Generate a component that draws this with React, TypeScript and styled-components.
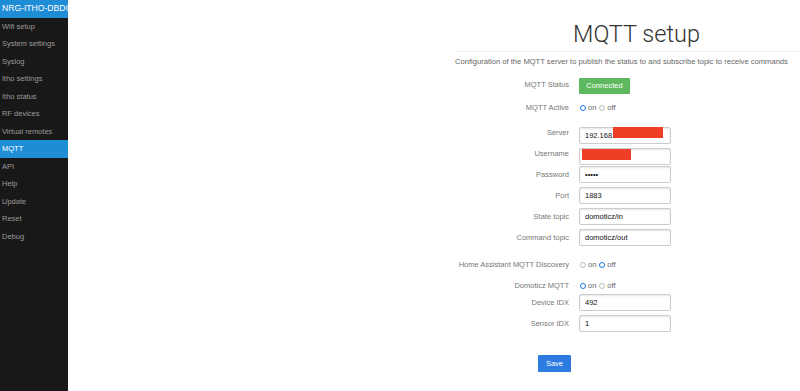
import React from 'react';
import styled, { createGlobalStyle } from 'styled-components';

const GlobalStyle = createGlobalStyle`
  html, body {
    margin: 0;
    padding: 0;
    background: #fff;
    overflow: hidden;
  }
  body {
    font-family: "Liberation Sans", Arial, Helvetica, sans-serif;
  }
`;

const Layout = styled.div`
  display: flex;
  width: 800px;
  height: 391px;
  overflow: hidden;
`;

const Menu = styled.nav`
  width: 68px;
  flex: none;
  background: #191818;
  overflow: hidden;
`;

const Brand = styled.div`
  height: 17.5px;
  line-height: 17.5px;
  background: #1f8dd6;
  color: #fff;
  font-size: 8.6px;
  padding-left: 2px;
  white-space: nowrap;
  overflow: hidden;
  text-transform: uppercase;
`;

const MenuItem = styled.div<{ $active?: boolean }>`
  height: 17.5px;
  line-height: 17.5px;
  padding-left: 2px;
  font-size: 7.5px;
  color: ${(p) => (p.$active ? '#fff' : '#999')};
  background: ${(p) => (p.$active ? '#1f8dd6' : 'transparent')};
  white-space: nowrap;
`;

const Main = styled.main`
  flex: 1;
  padding-left: 387px;
  overflow: hidden;
`;

const Content = styled.div`
  width: 363px;
`;

const Title = styled.h1`
  margin: 0;
  padding-top: 19px;
  height: 31px;
  font-family: Roboto, "Liberation Sans", sans-serif;
  font-size: 23.5px;
  font-weight: 300;
  color: #333;
  text-align: center;
  line-height: 31px;
`;

const Rule = styled.hr`
  margin: 1px 0 0;
  border: 0;
  border-top: 1px solid #eee;
`;

const Description = styled.p`
  margin: 5px 0 0;
  font-size: 7.6px;
  line-height: 10px;
  color: #666;
  white-space: nowrap;
`;

const Form = styled.form`
  display: flex;
  flex-direction: column;
`;

const Row = styled.div<{ $top: number; $h?: number }>`
  display: grid;
  grid-template-columns: 114px auto;
  column-gap: 10px;
  align-items: center;
  margin-top: ${(p) => p.$top}px;
  height: ${(p) => p.$h ?? 17}px;
`;

const Label = styled.label`
  text-align: right;
  font-size: 7.5px;
  color: #777;
  white-space: nowrap;
`;

const Field = styled.div`
  position: relative;
  width: 92px;
  height: 17px;
`;

const Input = styled.input`
  box-sizing: border-box;
  width: 92px;
  height: 17px;
  padding: 0 5px;
  border: 1px solid #ccc;
  border-radius: 2px;
  box-shadow: inset 0 1px 2px #e6e6e6;
  font-family: inherit;
  font-size: 7.5px;
  color: #111;
  outline: none;
`;

const Redact = styled.span<{ $left: number; $top: number; $w: number; $h: number }>`
  position: absolute;
  left: ${(p) => p.$left}px;
  top: ${(p) => p.$top}px;
  width: ${(p) => p.$w}px;
  height: ${(p) => p.$h}px;
  background: #ec3f26;
`;

const StatusBadge = styled.span`
  display: inline-block;
  width: 51px;
  height: 16px;
  line-height: 16px;
  background: #5eb95e;
  color: #fff;
  font-size: 7.5px;
  text-align: center;
  border-radius: 1px;
`;

const Radios = styled.div`
  display: flex;
  align-items: center;
  font-size: 7.5px;
  color: #666;
`;

const Radio = styled.span<{ $checked?: boolean; $gap?: boolean }>`
  box-sizing: border-box;
  display: inline-block;
  width: 6px;
  height: 6px;
  margin: 0 2px 0 ${(p) => (p.$gap ? 3 : 1)}px;
  border-radius: 50%;
  border: ${(p) => (p.$checked ? '1.8px solid #1a73e8' : '0.6px solid #bbb')};
  background: #fff;
`;

const SaveButton = styled.button`
  margin-left: 83px;
  margin-top: 23px;
  width: 33px;
  height: 17px;
  padding: 0;
  border: 0;
  border-radius: 1px;
  background: #2b7be0;
  color: #fff;
  font-family: inherit;
  font-size: 7.5px;
`;

const menu = [
  'Wifi setup',
  'System settings',
  'Syslog',
  'Itho settings',
  'Itho status',
  'RF devices',
  'Virtual remotes',
  'MQTT',
  'API',
  'Help',
  'Update',
  'Reset',
  'Debug',
];

const OnOff: React.FC<{ on: boolean }> = ({ on }) => (
  <Radios>
    <Radio $checked={on} />
    on
    <Radio $checked={!on} $gap />
    off
  </Radios>
);

const App: React.FC = () => {
  return (
    <Layout>
      <GlobalStyle />
      <Menu>
        <Brand>NRG-ITHO-DBDC</Brand>
        {menu.map((m) => (
          <MenuItem key={m} $active={m === 'MQTT'}>
            {m}
          </MenuItem>
        ))}
      </Menu>
      <Main>
        <Content>
          <Title>MQTT setup</Title>
          <Rule />
          <Description>
            Configuration of the MQTT server to publish the status to and subscribe topic to receive commands
          </Description>
          <Form>
            <Row $top={7} $h={16}>
              <Label>MQTT Status</Label>
              <div>
                <StatusBadge>Connected</StatusBadge>
              </div>
            </Row>
            <Row $top={9}>
              <Label>MQTT Active</Label>
              <OnOff on={true} />
            </Row>
            <Row $top={8}>
              <Label>Server</Label>
              <Field>
                <Input defaultValue="192.168." />
                <Redact $left={34} $top={3} $w={50} $h={11} />
              </Field>
            </Row>
            <Row $top={4.1}>
              <Label>Username</Label>
              <Field>
                <Input defaultValue="" />
                <Redact $left={3} $top={3.5} $w={49} $h={11.5} />
              </Field>
            </Row>
            <Row $top={4.1}>
              <Label>Password</Label>
              <Input type="password" defaultValue="admin" />
            </Row>
            <Row $top={4.1}>
              <Label>Port</Label>
              <Input defaultValue="1883" />
            </Row>
            <Row $top={4.1}>
              <Label>State topic</Label>
              <Input defaultValue="domoticz/in" />
            </Row>
            <Row $top={4.1}>
              <Label>Command topic</Label>
              <Input defaultValue="domoticz/out" />
            </Row>
            <Row $top={10}>
              <Label>Home Assistant MQTT Discovery</Label>
              <OnOff on={false} />
            </Row>
            <Row $top={4}>
              <Label>Domoticz MQTT</Label>
              <OnOff on={true} />
            </Row>
            <Row $top={0}>
              <Label>Device IDX</Label>
              <Input defaultValue="492" />
            </Row>
            <Row $top={4}>
              <Label>Sensor IDX</Label>
              <Input defaultValue="1" />
            </Row>
            <div>
              <SaveButton type="button">Save</SaveButton>
            </div>
          </Form>
        </Content>
      </Main>
    </Layout>
  );
};

export default App;
